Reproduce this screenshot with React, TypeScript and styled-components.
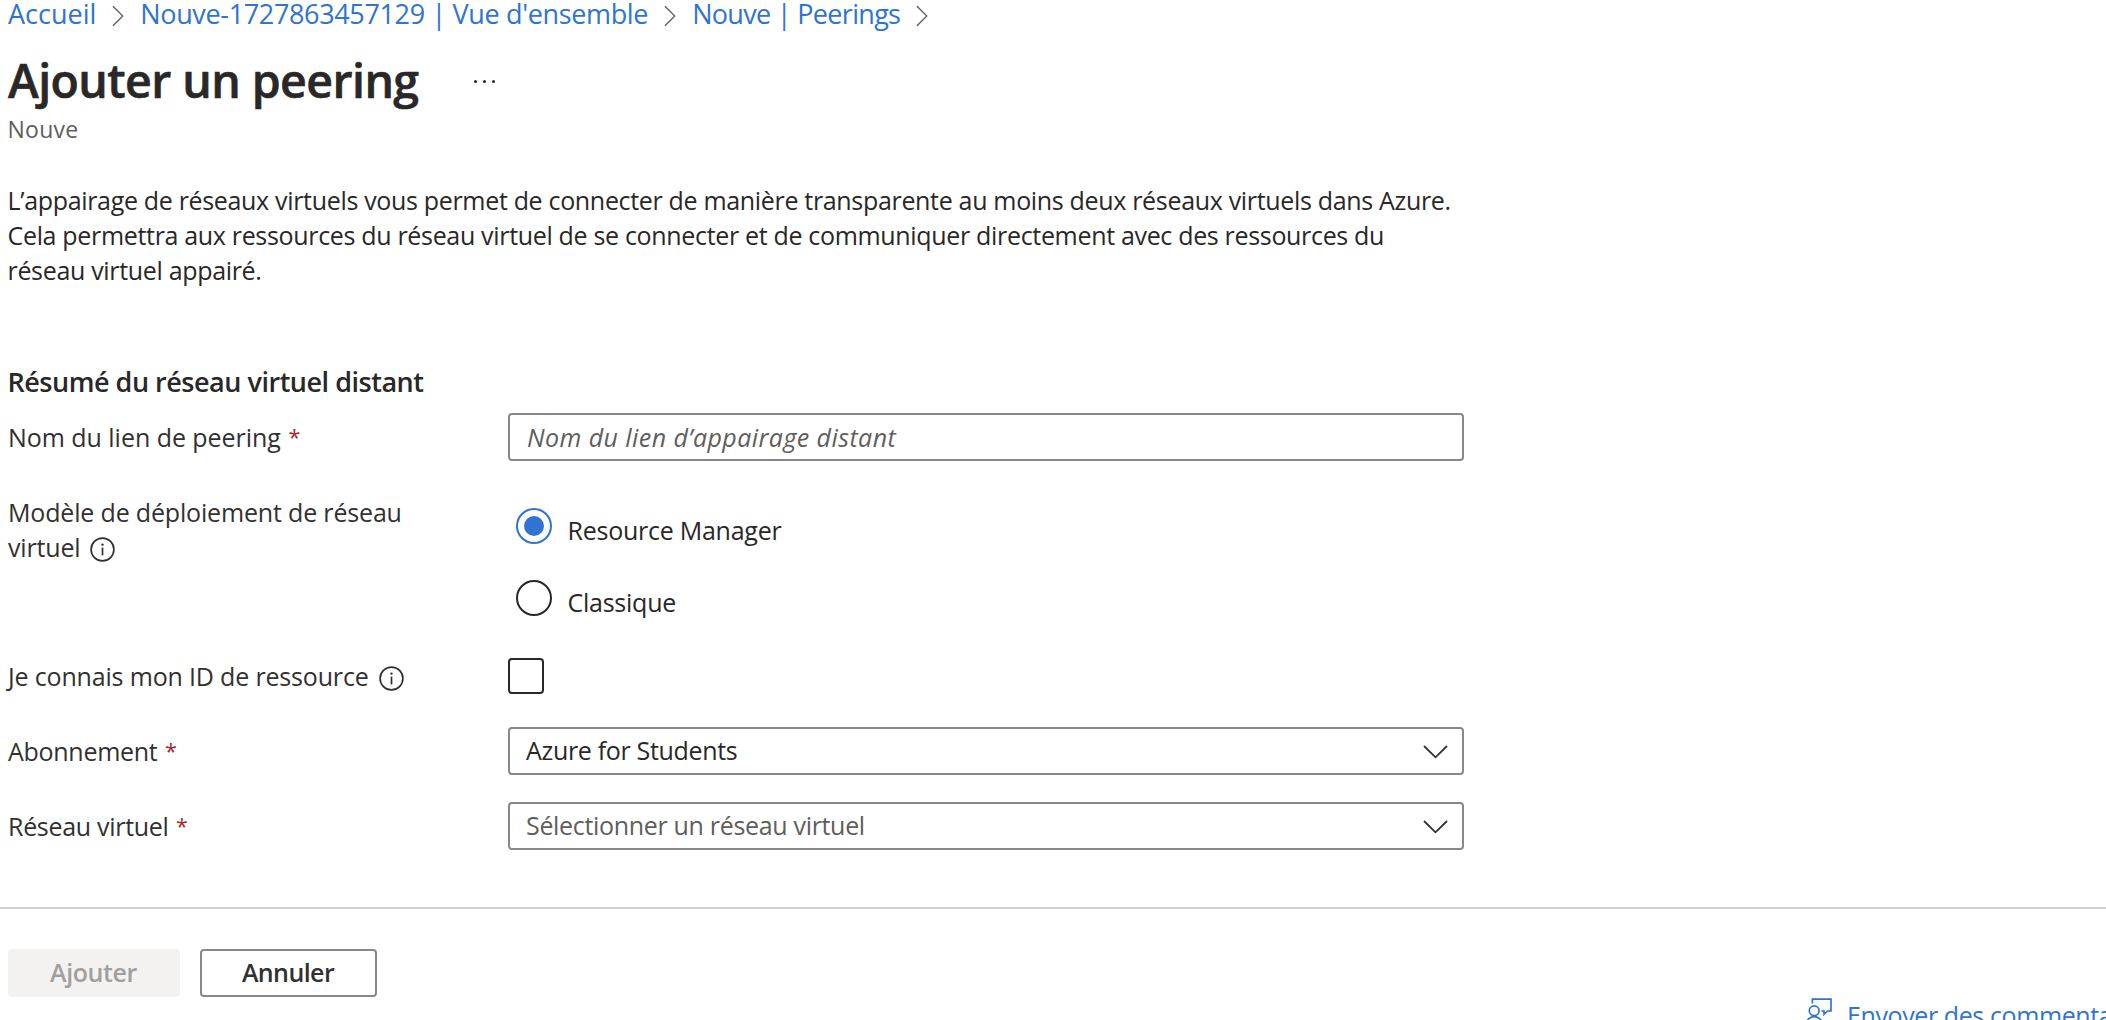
import React, { useState } from 'react';
import styled, { createGlobalStyle } from 'styled-components';

const colors = {
  link: '#2f74d0',
  text: '#292827',
  label: '#323130',
  muted: '#605e5c',
  border: '#8a8886',
  required: '#a4262c',
  disabled: '#a19f9d',
};

const GlobalStyle = createGlobalStyle`
  *, *::before, *::after { box-sizing: border-box; }
  body {
    margin: 0;
    overflow: hidden;
    background: #fff;
    font-family: "Open Sans", "Noto Sans", sans-serif;
    color: ${colors.text};
  }
`;

const Page = styled.div`
  display: flex;
  flex-direction: column;
  height: 1020px;
  overflow: hidden;
`;

const Breadcrumb = styled.nav`
  display: flex;
  align-items: center;
  flex: none;
  height: 27px;
  padding-left: 8px;
  gap: 16px;
  font-size: 27px;
  line-height: 27px;
`;

const Crumb = styled.a<{ $track: number }>`
  color: ${colors.link};
  white-space: nowrap;
  letter-spacing: ${(p) => p.$track}px;
`;

const CrumbChevron = styled.svg`
  flex: none;
  width: 12px;
  height: 22px;
  margin-top: 4px;
`;

const TitleRow = styled.header`
  display: flex;
  align-items: center;
  flex: none;
  margin-top: 25px;
  padding-left: 8px;
`;

const Title = styled.h1`
  margin: 0;
  font-size: 46.5px;
  line-height: 56px;
  font-weight: 600;
  letter-spacing: -0.58px;
  -webkit-text-stroke: 0.6px ${colors.text};
`;

const MoreButton = styled.button`
  display: flex;
  gap: 5.6px;
  margin: 3px 0 0 55px;
  padding: 0;
  border: 0;
  background: none;
`;

const Dot = styled.span`
  width: 3.4px;
  height: 3.4px;
  border-radius: 50%;
  background: ${colors.text};
`;

const Subtitle = styled.div`
  flex: none;
  margin-top: 8px;
  padding-left: 7.5px;
  font-size: 23px;
  line-height: 26px;
  letter-spacing: 0.24px;
  color: ${colors.muted};
`;

const Intro = styled.p`
  flex: none;
  width: 1460px;
  margin: 41px 0 0;
  padding-left: 7.5px;
  font-size: 25px;
  line-height: 35px;
  letter-spacing: -0.325px;
`;

const SectionTitle = styled.h2`
  flex: none;
  margin: 75px 0 0;
  padding-left: 7.5px;
  font-size: 27px;
  line-height: 37px;
  font-weight: 600;
  letter-spacing: -0.48px;
`;

const Field = styled.div<{ $gap: number; $top?: boolean }>`
  display: flex;
  flex: none;
  align-items: ${(p) => (p.$top ? 'flex-start' : 'center')};
  width: 1464px;
  margin-top: ${(p) => p.$gap}px;
  padding-left: 8px;
`;

const LabelCell = styled.div`
  flex: 0 0 500px;
  padding-right: 80px;
`;

const Label = styled.label<{ $track: number }>`
  font-size: 25px;
  line-height: 35px;
  color: ${colors.label};
  letter-spacing: ${(p) => p.$track}px;
`;

const Required = styled.span`
  margin-left: 7.5px;
  font-size: 21.5px;
  line-height: 0;
  vertical-align: 2px;
  color: ${colors.required};
`;

const InfoSvg = styled.svg`
  width: 25px;
  height: 25px;
  margin-left: 10px;
  vertical-align: -5px;
`;

const TextInput = styled.input`
  flex: 1;
  min-width: 0;
  height: 48px;
  padding: 0 17px 1px;
  border: 2px solid ${colors.border};
  border-radius: 4px;
  outline: none;
  font-family: inherit;
  font-size: 25px;
  color: ${colors.text};
  &::placeholder {
    color: ${colors.muted};
    opacity: 1;
    font-style: italic;
    letter-spacing: 0.43px;
  }
`;

const RadioGroup = styled.div`
  display: flex;
  flex-direction: column;
  gap: 36px;
  padding: 13px 0 0 8px;
`;

const RadioRow = styled.div`
  display: flex;
  align-items: center;
  height: 36px;
`;

const RadioCircle = styled.span<{ $on: boolean }>`
  display: grid;
  place-items: center;
  width: 36px;
  height: 36px;
  border: 2px solid ${(p) => (p.$on ? colors.link : colors.text)};
  border-radius: 50%;
  &::after {
    content: '';
    width: 20px;
    height: 20px;
    border-radius: 50%;
    background: ${(p) => (p.$on ? colors.link : 'transparent')};
  }
`;

const RadioText = styled.span`
  margin: 8px 0 0 15.5px;
  font-size: 25px;
  line-height: 36px;
  letter-spacing: -0.25px;
`;

const Checkbox = styled.span`
  width: 36px;
  height: 36px;
  border: 2px solid ${colors.text};
  border-radius: 4px;
`;

const Select = styled.div<{ $empty?: boolean }>`
  display: flex;
  flex: 1;
  align-items: center;
  justify-content: space-between;
  height: 48px;
  padding: 0 14px 2px 16px;
  border: 2px solid ${colors.border};
  border-radius: 4px;
  font-size: 25px;
  line-height: 35px;
  letter-spacing: -0.32px;
  color: ${(p) => (p.$empty ? colors.muted : colors.text)};
`;

const SelectChevron = styled.svg`
  width: 25px;
  height: 14px;
  margin-top: 4px;
`;

const Footer = styled.footer`
  display: flex;
  flex-direction: column;
  flex: none;
  margin-top: 57px;
  padding-top: 40px;
  border-top: 2px solid #d1d1d1;
`;

const Actions = styled.div`
  display: flex;
  gap: 20px;
  padding-left: 8px;
`;

const Button = styled.button<{ $width: number; $track: number }>`
  width: ${(p) => p.$width}px;
  height: 48px;
  padding: 0 1px 1px 0;
  border: 2px solid ${colors.border};
  border-radius: 4px;
  background: #fff;
  font-family: inherit;
  font-size: 25px;
  line-height: 35px;
  font-weight: 600;
  letter-spacing: ${(p) => p.$track}px;
  color: ${colors.label};
  &:disabled {
    border-color: #f3f2f1;
    background: #f3f2f1;
    color: ${colors.disabled};
  }
`;

const Feedback = styled.a`
  display: flex;
  align-self: flex-end;
  width: 300px;
  margin-top: 1px;
  overflow: hidden;
  white-space: nowrap;
  font-size: 25px;
  line-height: 35px;
  letter-spacing: -0.4px;
  color: ${colors.link};
`;

const FeedbackSvg = styled.svg`
  flex: none;
  width: 27px;
  height: 27px;
  margin-right: 14px;
`;

const Chevron = () => (
  <CrumbChevron viewBox="0 0 12 22" fill="none" stroke="#605e5c" strokeWidth="1.3">
    <path d="M1 1.2 10.8 11 1 20.8" />
  </CrumbChevron>
);

const Info = () => (
  <InfoSvg viewBox="0 0 25 25" fill="none" stroke={colors.label} strokeWidth="1.7">
    <circle cx="12.5" cy="12.5" r="11.4" />
    <path d="M12.5 10.6V18.4" />
    <circle cx="12.5" cy="7.6" r="1.2" fill={colors.label} stroke="none" />
  </InfoSvg>
);

const FeedbackIcon = () => (
  <FeedbackSvg viewBox="0 0 27 27" fill="none" stroke={colors.link} strokeWidth="1.7">
    <path d="M6.4 5.6V1.2H25V13h-3.4L18 16.4V13h-2.6" />
    <circle cx="8.2" cy="12.8" r="4.9" />
    <path d="M.6 25a7.7 7.7 0 0 1 15.2 0" />
  </FeedbackSvg>
);

const Dropdown = ({ value, empty }: { value: string; empty?: boolean }) => (
  <Select $empty={empty} role="combobox">
    {value}
    <SelectChevron viewBox="0 0 25 14" fill="none" stroke={colors.label} strokeWidth="1.8">
      <path d="M1 1 12.5 12.3 24 1" />
    </SelectChevron>
  </Select>
);

const models = ['Resource Manager', 'Classique'];

export default function App() {
  const [model, setModel] = useState(models[0]);
  return (
    <Page>
      <GlobalStyle />
      <Breadcrumb>
        <Crumb $track={0}>Accueil</Crumb>
        <Chevron />
        <Crumb $track={-0.353}>Nouve-1727863457129 | Vue d'ensemble</Crumb>
        <Chevron />
        <Crumb $track={-0.685}>Nouve | Peerings</Crumb>
        <Chevron />
      </Breadcrumb>
      <TitleRow>
        <Title>Ajouter un peering</Title>
        <MoreButton aria-label="Plus">
          <Dot />
          <Dot />
          <Dot />
        </MoreButton>
      </TitleRow>
      <Subtitle>Nouve</Subtitle>
      <Intro>
        L’appairage de réseaux virtuels vous permet de connecter de manière transparente au moins
        deux réseaux virtuels dans Azure. Cela permettra aux ressources du réseau virtuel de se
        connecter et de communiquer directement avec des ressources du réseau virtuel appairé.
      </Intro>
      <SectionTitle>Résumé du réseau virtuel distant</SectionTitle>
      <Field $gap={13}>
        <LabelCell>
          <Label $track={-0.04}>
            Nom du lien de peering<Required>*</Required>
          </Label>
        </LabelCell>
        <TextInput placeholder="Nom du lien d’appairage distant" />
      </Field>
      <Field $gap={34} $top>
        <LabelCell>
          <Label $track={-0.17}>
            Modèle de déploiement de réseau virtuel
            <Info />
          </Label>
        </LabelCell>
        <RadioGroup>
          {models.map((m) => (
            <RadioRow key={m} onClick={() => setModel(m)}>
              <RadioCircle $on={m === model} />
              <RadioText>{m}</RadioText>
            </RadioRow>
          ))}
        </RadioGroup>
      </Field>
      <Field $gap={42}>
        <LabelCell>
          <Label $track={-0.17}>
            Je connais mon ID de ressource
            <Info />
          </Label>
        </LabelCell>
        <Checkbox />
      </Field>
      <Field $gap={33}>
        <LabelCell>
          <Label $track={-0.28}>
            Abonnement<Required>*</Required>
          </Label>
        </LabelCell>
        <Dropdown value="Azure for Students" />
      </Field>
      <Field $gap={27}>
        <LabelCell>
          <Label $track={-0.3}>
            Réseau virtuel<Required>*</Required>
          </Label>
        </LabelCell>
        <Dropdown value="Sélectionner un réseau virtuel" empty />
      </Field>
      <Footer>
        <Actions>
          <Button $width={172} $track={-0.4} disabled>
            Ajouter
          </Button>
          <Button $width={177} $track={-0.59}>
            Annuler
          </Button>
        </Actions>
        <Feedback>
          <FeedbackIcon />
          Envoyer des commentaires
        </Feedback>
      </Footer>
    </Page>
  );
}
